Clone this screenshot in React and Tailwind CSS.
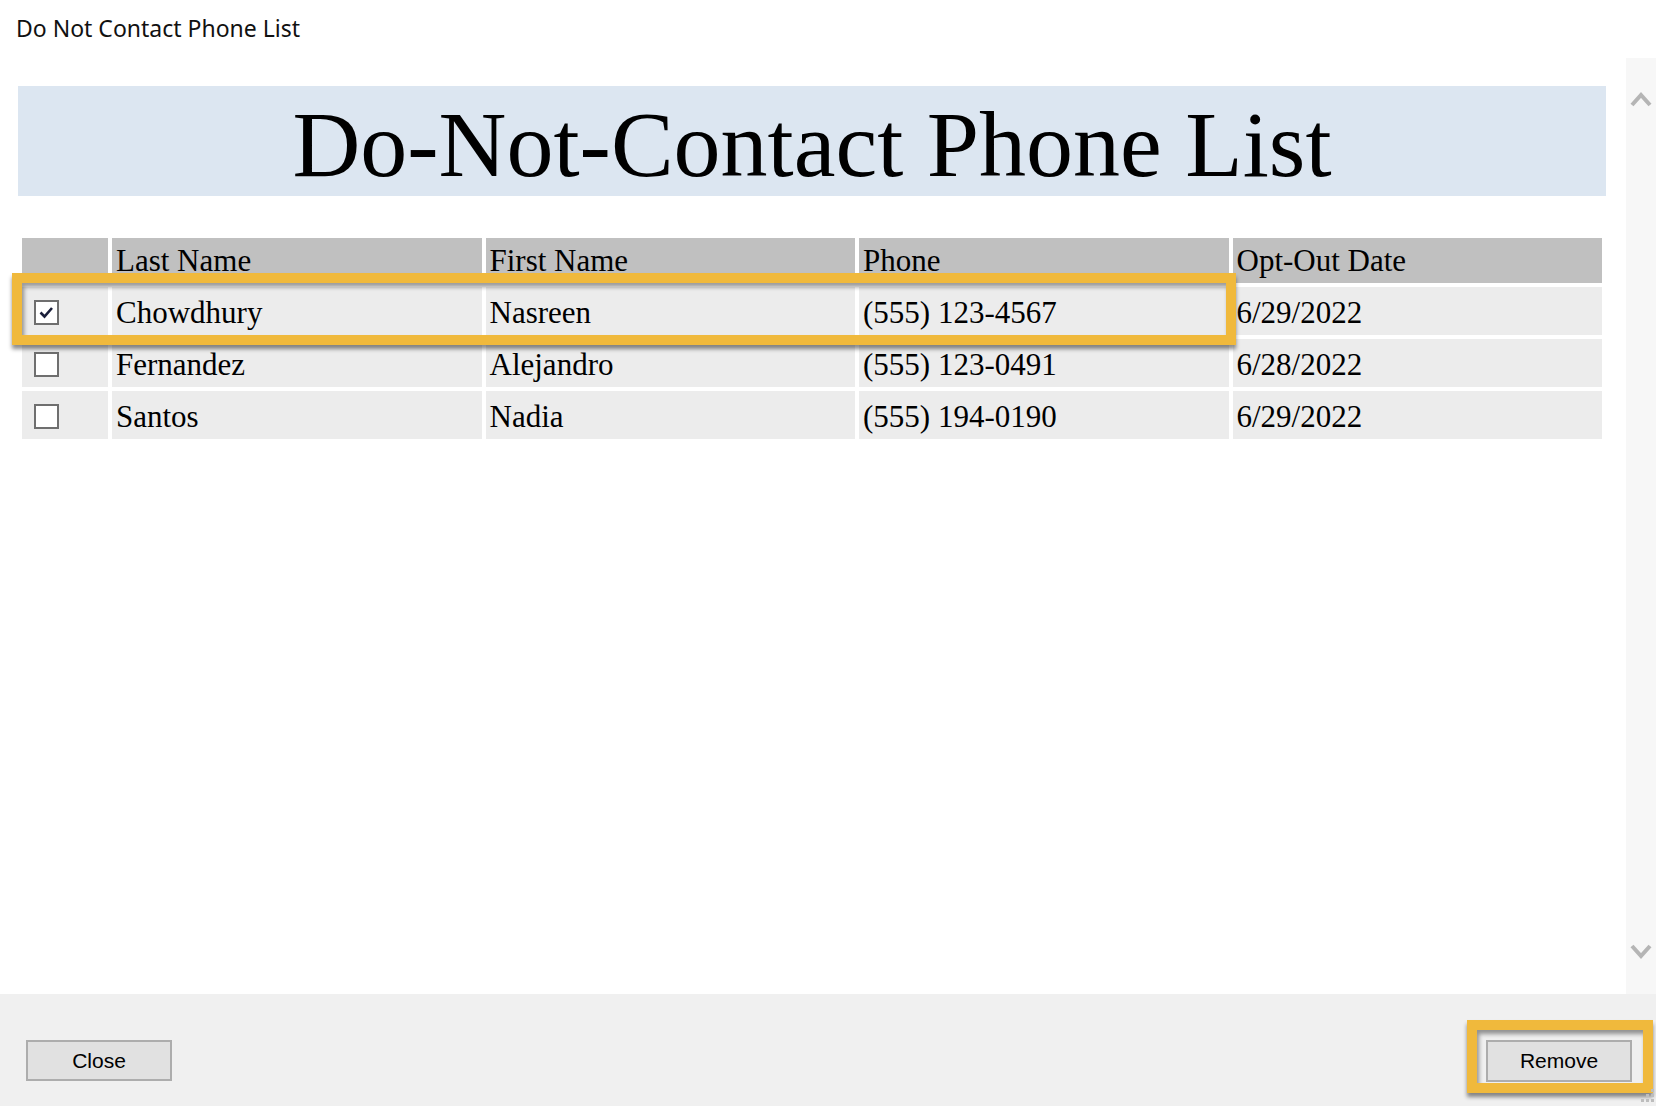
import React from "react";

const rows = [
  { checked: true, last: "Chowdhury", first: "Nasreen", phone: "(555) 123-4567", date: "6/29/2022" },
  { checked: false, last: "Fernandez", first: "Alejandro", phone: "(555) 123-0491", date: "6/28/2022" },
  { checked: false, last: "Santos", first: "Nadia", phone: "(555) 194-0190", date: "6/29/2022" },
];

function Checkbox({ checked }) {
  return (
    <div className="w-[25px] h-[25px] border-2 border-[#6f6f6f] bg-white flex items-center justify-center">
      {checked && (
        <svg width="19" height="19" viewBox="0 0 19 19">
          <path d="M3.5 9.5 L7.5 13.5 L15 5" fill="none" stroke="#1b1f3a" strokeWidth="2.6" />
        </svg>
      )}
    </div>
  );
}

export default function App() {
  return (
    <div className="w-[1656px] h-[1106px] flex flex-col bg-white overflow-hidden" style={{ fontFamily: '"Liberation Serif", serif' }}>
      {/* Title bar */}
      <div className="h-[58px] shrink-0 flex items-start pl-[16px] pt-[13px]">
        <span className="text-[23px] leading-[30px] text-[#111]" style={{ fontFamily: '"Noto Sans", "Open Sans", sans-serif' }}>
          Do Not Contact Phone List
        </span>
      </div>

      {/* Content + scrollbar */}
      <div className="flex flex-1 min-h-0">
        <div className="flex-1 pl-[18px] pr-[20px] pt-[28px]">
          <div className="h-[110px] bg-[#dce6f1] flex items-center justify-center">
            <span className="text-[94px] leading-none text-black pt-[6px]">Do-Not-Contact Phone List</span>
          </div>

          <div className="relative mt-[38px]">
            <table className="w-full table-fixed border-separate border-spacing-[4px] text-[31px] text-black">
              <colgroup>
                <col className="w-[86px]" />
                <col />
                <col />
                <col />
                <col />
              </colgroup>
              <thead>
                <tr className="h-[45px]">
                  <th className="bg-[#c0c0c0] font-normal"></th>
                  <th className="bg-[#c0c0c0] font-normal text-left pl-[4px] leading-[45px]">Last Name</th>
                  <th className="bg-[#c0c0c0] font-normal text-left pl-[4px] leading-[45px]">First Name</th>
                  <th className="bg-[#c0c0c0] font-normal text-left pl-[4px] leading-[45px]">Phone</th>
                  <th className="bg-[#c0c0c0] font-normal text-left pl-[4px] leading-[45px]">Opt-Out Date</th>
                </tr>
              </thead>
              <tbody>
                {rows.map((r) => (
                  <tr key={r.last} className="h-[48px]">
                    <td className="bg-[#ececec] pl-[12px] pt-[2px]">
                      <Checkbox checked={r.checked} />
                    </td>
                    <td className="bg-[#ececec] pl-[4px] pt-[3px] leading-[45px]">{r.last}</td>
                    <td className="bg-[#ececec] pl-[4px] pt-[3px] leading-[45px]">{r.first}</td>
                    <td className="bg-[#ececec] pl-[4px] pt-[3px] leading-[45px]">{r.phone}</td>
                    <td className="bg-[#ececec] pl-[4px] pt-[3px] leading-[45px]">{r.date}</td>
                  </tr>
                ))}
              </tbody>
            </table>
            {/* Highlight overlay on first row */}
            <div className="absolute left-[-6px] top-[39px] w-[1224px] h-[72px] border-[10px] border-[#f0b93c] shadow-[0_4px_4px_rgba(0,0,0,0.45),inset_2px_4px_4px_rgba(0,0,0,0.4)] pointer-events-none"></div>
          </div>
        </div>

        {/* Scrollbar */}
        <div className="w-[30px] shrink-0 bg-[#f7f7f7] flex flex-col items-center justify-between pt-[32px] pb-[33px]">
          <svg width="22" height="18" viewBox="0 0 22 18">
            <path d="M2 15 L11 5 L20 15" fill="none" stroke="#b5b5b5" strokeWidth="4" />
          </svg>
          <svg width="22" height="18" viewBox="0 0 22 18">
            <path d="M2 3 L11 13 L20 3" fill="none" stroke="#b5b5b5" strokeWidth="4" />
          </svg>
        </div>
      </div>

      {/* Bottom panel */}
      <div className="h-[112px] shrink-0 bg-[#f0f0f0] relative flex items-start justify-between pt-[46px] pl-[26px] pr-[24px]" style={{ fontFamily: '"Liberation Sans", Arial, sans-serif' }}>
        <button className="w-[146px] h-[41px] border-2 border-[#adadad] bg-[#e1e1e1] text-[21px] text-black flex items-center justify-center">
          Close
        </button>
        <div className="relative">
          <button className="w-[146px] h-[42px] border-2 border-[#adadad] bg-[#e1e1e1] text-[21px] text-black flex items-center justify-center">
            Remove
          </button>
          <div className="absolute left-[-19px] top-[-20px] w-[186px] h-[73px] border-[10px] border-[#f0b93c] shadow-[0_4px_4px_rgba(0,0,0,0.45),inset_2px_4px_4px_rgba(0,0,0,0.4)] pointer-events-none"></div>
        </div>
        {/* resize grip */}
        <svg className="absolute right-[1px] bottom-[3px]" width="16" height="16" viewBox="0 0 16 16">
          <rect x="12" y="2" width="3" height="3" fill="#bdbdbd" />
          <rect x="7" y="7" width="3" height="3" fill="#bdbdbd" />
          <rect x="12" y="7" width="3" height="3" fill="#bdbdbd" />
          <rect x="2" y="12" width="3" height="3" fill="#bdbdbd" />
          <rect x="7" y="12" width="3" height="3" fill="#bdbdbd" />
          <rect x="12" y="12" width="3" height="3" fill="#bdbdbd" />
        </svg>
      </div>
    </div>
  );
}
